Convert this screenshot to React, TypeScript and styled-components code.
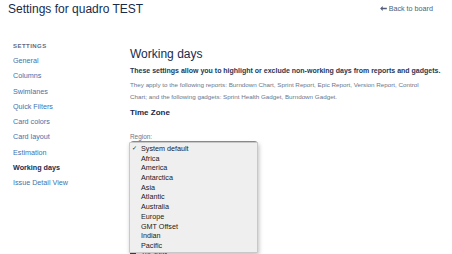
import styled, { createGlobalStyle } from 'styled-components';
import React from 'react';

const GlobalStyle = createGlobalStyle`
  html, body {
    margin: 0;
    padding: 0;
    background: #ffffff;
    font-family: "Liberation Sans", Arial, sans-serif;
    color: #172b4d;
    overflow: hidden;
  }
`;

const navItems = [
  'General',
  'Columns',
  'Swimlanes',
  'Quick Filters',
  'Card colors',
  'Card layout',
  'Estimation',
  'Working days',
  'Issue Detail View',
];

const regions = [
  'Africa',
  'America',
  'Antarctica',
  'Asia',
  'Atlantic',
  'Australia',
  'Europe',
  'GMT Offset',
  'Indian',
  'Pacific',
];

function App() {
  return (
    <Page>
      <GlobalStyle />
      <Header>
        <PageTitle>Settings for quadro TEST</PageTitle>
        <BackLink>
          <svg width="7" height="5" viewBox="0 0 8 6">
            <path d="M0 3 L3 0 L3 2 L8 2 L8 4 L3 4 L3 6 Z" fill="#505f79" />
          </svg>
          Back to board
        </BackLink>
      </Header>
      <Body>
        <Sidebar>
          <SideHeading>SETTINGS</SideHeading>
          {navItems.map((item) => (
            <NavItem key={item} active={item === 'Working days'}>
              {item}
            </NavItem>
          ))}
        </Sidebar>
        <Main>
          <Heading>Working days</Heading>
          <Lead>
            These settings allow you to highlight or exclude non-working days from reports and gadgets.
          </Lead>
          <Note>
            They apply to the following reports: Burndown Chart, Sprint Report, Epic Report, Version Report, Control
            Chart; and the following gadgets: Sprint Health Gadget, Burndown Gadget.
          </Note>
          <SubHeading>Time Zone</SubHeading>
          <FieldLabel>Region:</FieldLabel>
          <SelectWrap>
            <SelectBox />
            <Menu>
              <MenuItem>
                <Check>✓</Check>System default
              </MenuItem>
              {regions.map((r) => (
                <MenuItem key={r}>
                  <Check />
                  {r}
                </MenuItem>
              ))}
            </Menu>
          </SelectWrap>
          <FieldLabel>Time zone:</FieldLabel>
          <SelectBoxPlain />
          <DaysHeading>Standard working days</DaysHeading>
          <CheckRow>
            <CheckBox />
            Monday
          </CheckRow>
          <CheckRow>
            <CheckBox />
            Tuesday
          </CheckRow>
        </Main>
      </Body>
    </Page>
  );
}

export default App;

const Page = styled.div`
  width: 452px;
  height: 254px;
  overflow: hidden;
`;

const Header = styled.header`
  display: flex;
  justify-content: space-between;
  align-items: flex-start;
  padding: 1px 19px 0 8px;
  height: 27px;
`;

const PageTitle = styled.h1`
  margin: 0;
  font-size: 12px;
  font-weight: 400;
  line-height: 17px;
  color: #172b4d;
`;

const BackLink = styled.a`
  display: flex;
  align-items: center;
  gap: 2px;
  margin-top: 3px;
  font-size: 7.2px;
  color: #505f79;
  text-decoration: none;
`;

const Body = styled.div`
  display: flex;
`;

const Sidebar = styled.nav`
  width: 117px;
  padding: 12px 0 0 13px;
  display: flex;
  flex-direction: column;
  flex-shrink: 0;
`;

const SideHeading = styled.div`
  font-size: 6px;
  font-weight: 700;
  letter-spacing: 0.45px;
  color: #5e6c84;
  line-height: 12px;
  margin-bottom: 1px;
`;

const NavItem = styled.div<{ active?: boolean }>`
  font-size: 7.2px;
  line-height: 15.25px;
  color: ${(p) => (p.active ? '#172b4d' : '#3b73af')};
  font-weight: ${(p) => (p.active ? 700 : 400)};
`;

const Main = styled.main`
  flex: 1;
  padding-top: 17px;
  display: flex;
  flex-direction: column;
  align-items: flex-start;
`;

const Heading = styled.h2`
  margin: 0;
  font-size: 12px;
  font-weight: 400;
  line-height: 18px;
  color: #172b4d;
`;

const Lead = styled.p`
  margin: 2px 0 0;
  font-size: 7px;
  font-weight: 700;
  line-height: 11px;
  white-space: nowrap;
  color: #253858;
`;

const Note = styled.p`
  margin: 3px 0 0;
  width: 296px;
  font-size: 6.25px;
  line-height: 12px;
  color: #6b778c;
`;

const SubHeading = styled.h3`
  margin: 4px 0 0;
  font-size: 8px;
  font-weight: 700;
  line-height: 12px;
  color: #172b4d;
`;

const DaysHeading = styled(SubHeading)`
  margin-top: 18px;
`;

const FieldLabel = styled.label`
  display: block;
  margin-top: 13px;
  font-size: 6.4px;
  line-height: 9px;
  color: #6b778c;
`;

const SelectWrap = styled.div`
  position: relative;
`;

const SelectBox = styled.div`
  width: 126px;
  height: 16px;
  border: 1px solid #4c9aff;
  border-radius: 3px;
  background: #ffffff;
`;

const SelectBoxPlain = styled.div`
  margin-top: 1px;
  width: 126px;
  height: 16px;
  border: 1px solid #c1c7d0;
  border-radius: 3px;
  background: #fafbfc;
`;

const Menu = styled.ul`
  position: absolute;
  left: -1px;
  top: 1px;
  z-index: 10;
  margin: 0;
  padding: 1px 0 1px;
  list-style: none;
  width: 127px;
  background: #efefef;
  border: 1px solid #c8c8c8;
  border-radius: 1px;
  box-shadow: 1px 2px 4px rgba(0, 0, 0, 0.25);
`;

const MenuItem = styled.li`
  display: flex;
  align-items: center;
  height: 9.7px;
  line-height: 9.7px;
  font-size: 7.2px;
  color: #1a1a1a;
`;

const Check = styled.span`
  display: inline-block;
  width: 9px;
  padding-left: 2px;
  font-size: 6px;
`;

const CheckRow = styled.div`
  display: flex;
  align-items: center;
  gap: 5px;
  margin-top: 4px;
  font-size: 7px;
  line-height: 10px;
  color: #172b4d;
`;

const CheckBox = styled.span`
  width: 6px;
  height: 6px;
  border-radius: 1px;
  background: #0052cc;
`;
